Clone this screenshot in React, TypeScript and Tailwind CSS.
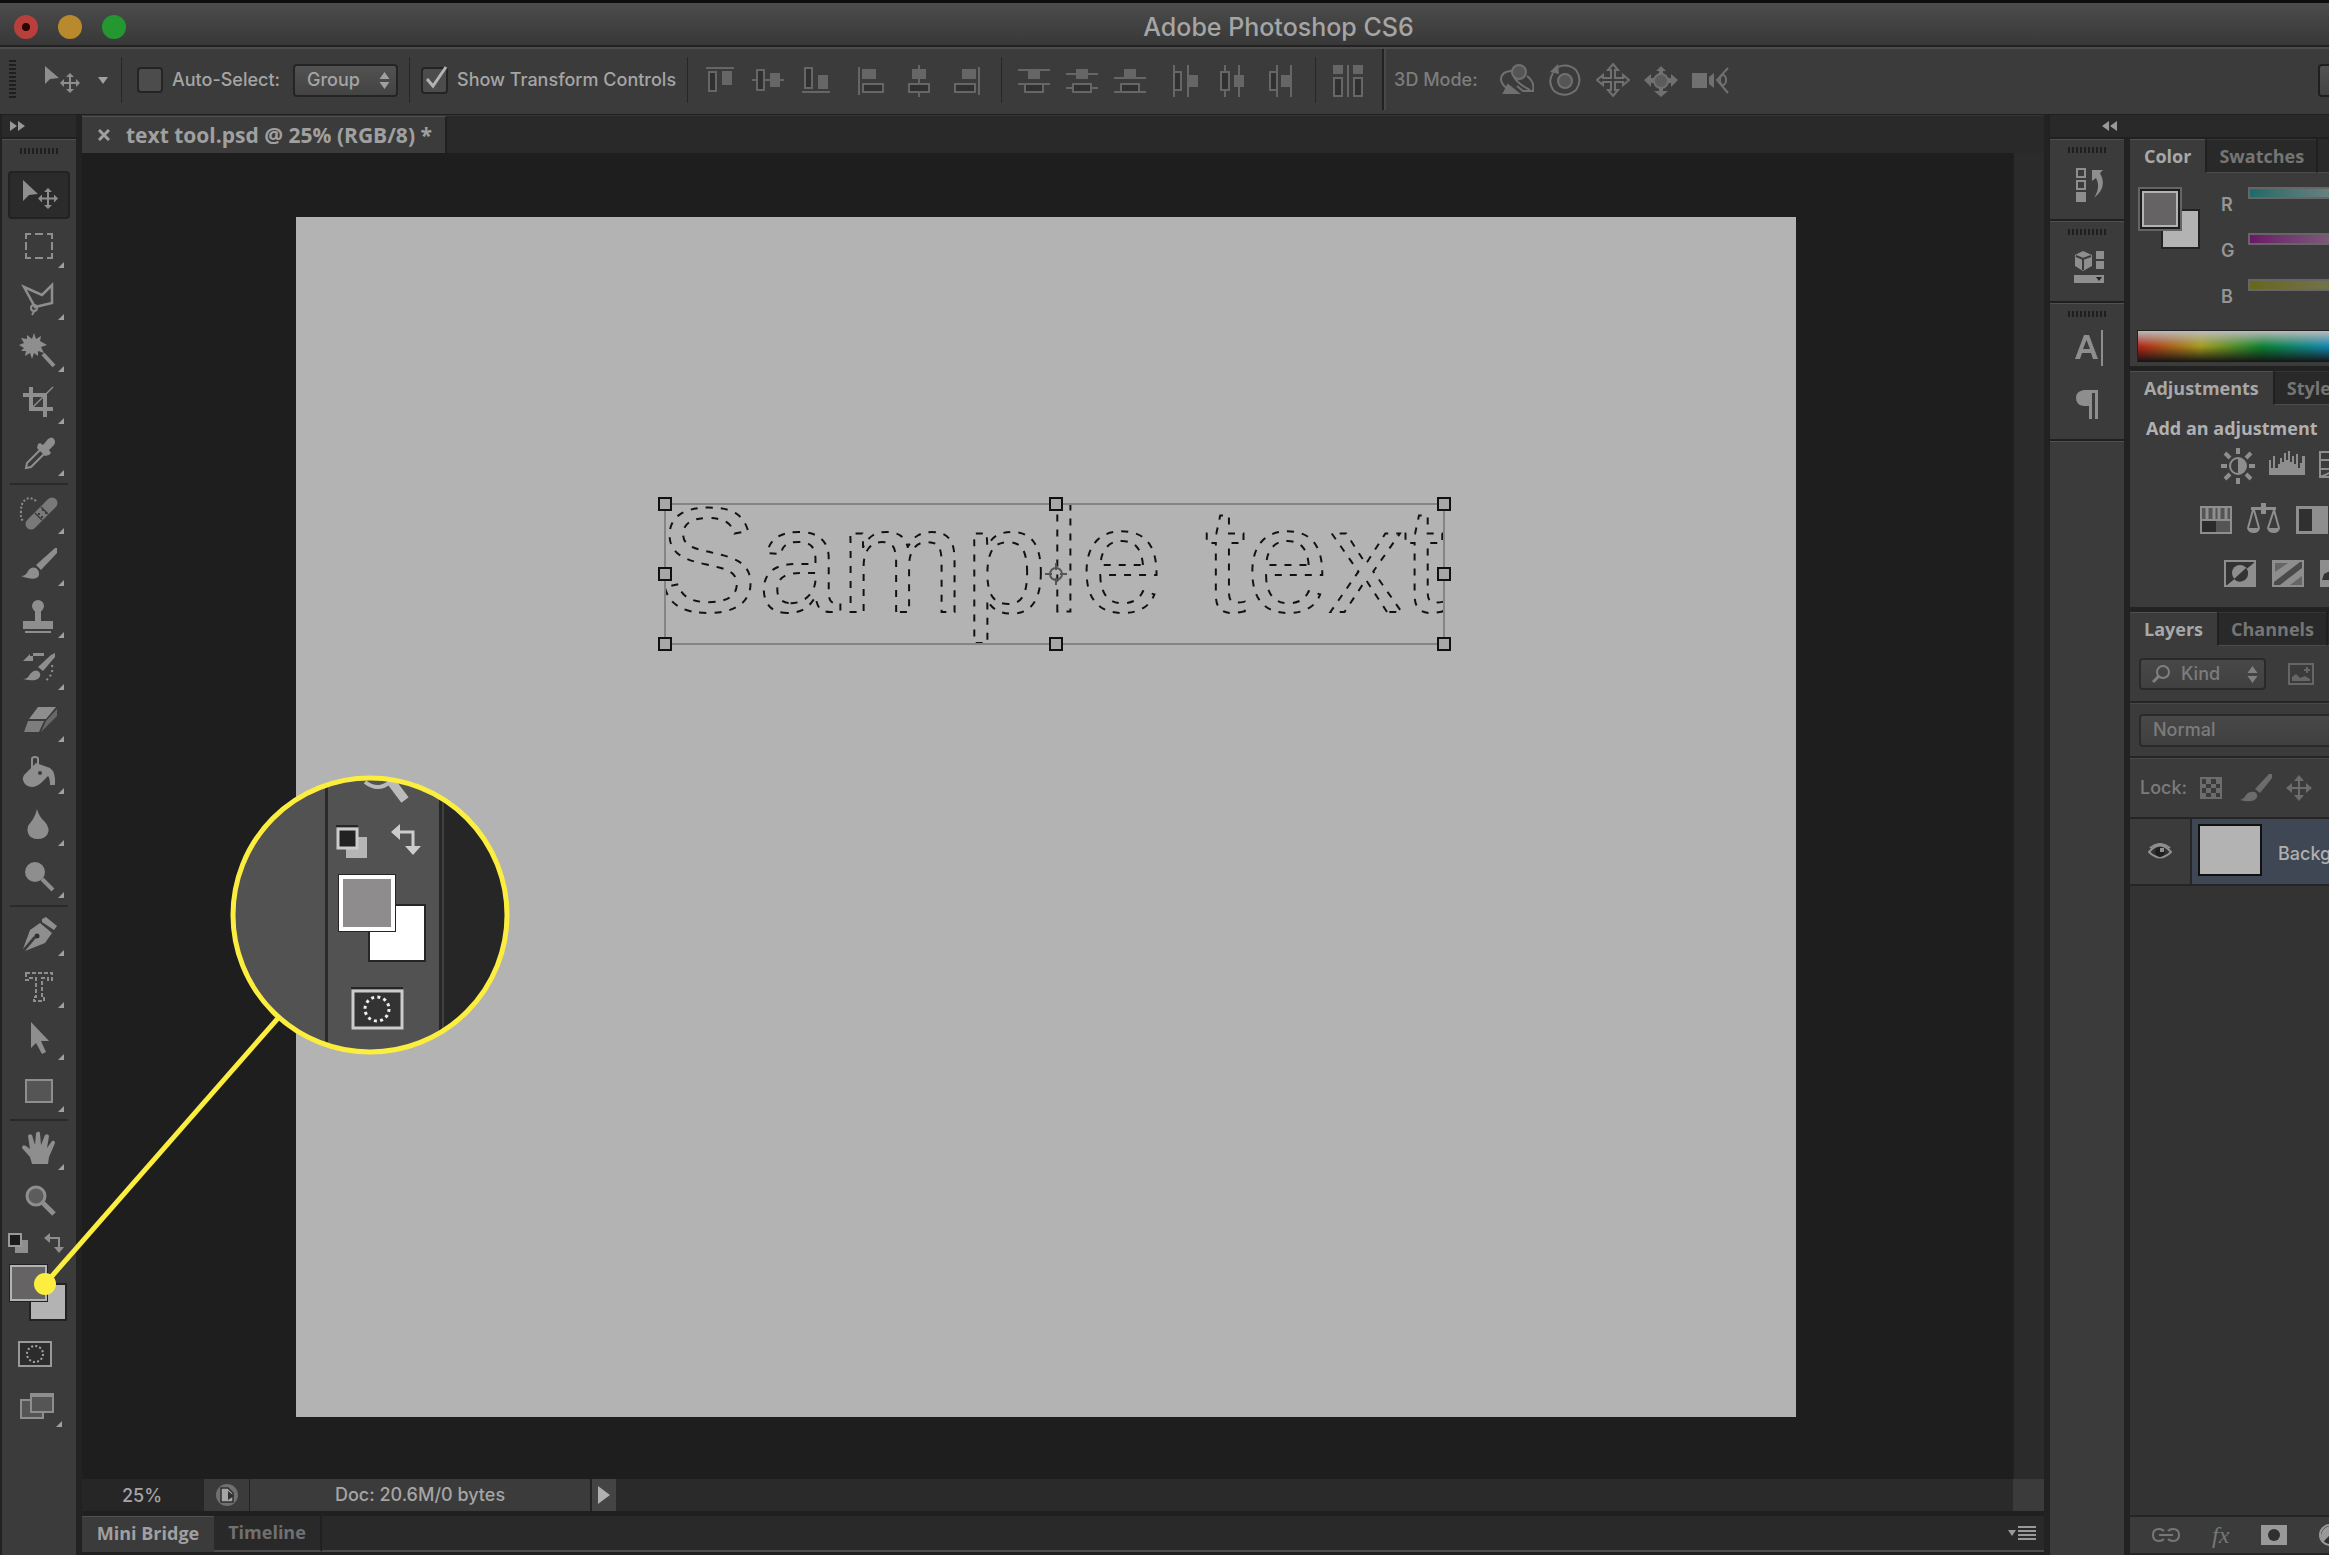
import type { ReactNode } from "react";

const TOOL_GROUPS: { name: string; art: ReactNode; corner?: boolean }[][] = [
  [
    {
      name: "Move tool",
      corner: false,
      art: (
        <>
          <path d="M2 3V24L8 18L17 17Z" fill="currentColor" />
          <path d="M27 14V29M19 21.5H35" stroke="currentColor" strokeWidth="2" />
          <path d="M27 11l-4 4h8zM27 32l-4-4h8zM17 21.5l4-4v8zM37 21.5l-4-4v8z" fill="currentColor" />
        </>
      ),
    },
    {
      name: "Rectangular marquee",
      art: (
        <path
          d="M5 10V5H10M14 5H22M26 5H31V10M31 13V21M31 24V29H26M22 29H14M10 29H5V24M5 21V13"
          fill="none"
          stroke="currentColor"
          strokeWidth="2"
        />
      ),
    },
    {
      name: "Polygonal lasso",
      art: (
        <>
          <path d="M3 6L21 14L31 4V22L14 26Z" fill="none" stroke="currentColor" strokeWidth="2.5" />
          <circle cx="13" cy="27" r="3" fill="none" stroke="currentColor" strokeWidth="2" />
          <path d="M14 29L11 34" stroke="currentColor" strokeWidth="2" />
        </>
      ),
    },
    {
      name: "Magic wand",
      art: (
        <>
          <path
            d="M13 0l2 6 5-3-1 5 7 4-6 2 3 6-6-2 0 5-4-3-2 6-2-6-5 3 1-5-5 0 3-3-5-3 5-2-3-5 6 1 0-4 5 4z"
            fill="currentColor"
          />
          <path d="M22 21L33 33" stroke="currentColor" strokeWidth="4" />
        </>
      ),
    },
    {
      name: "Crop tool",
      art: (
        <>
          <path d="M10 2V24H32M2 10H24V32" fill="none" stroke="currentColor" strokeWidth="4" />
          <path d="M32 2L12 22" stroke="currentColor" strokeWidth="1.5" />
        </>
      ),
    },
    {
      name: "Eyedropper",
      art: (
        <>
          <path d="M20 12L6 26L5 31L10 30L24 16" fill="none" stroke="currentColor" strokeWidth="2" />
          <path d="M17 7l2-1 3 2 5-6q4-3 6 0t0 6l-5 5 2 3-2 2-4 1-8-8z" fill="currentColor" />
        </>
      ),
    },
  ],
  [
    {
      name: "Healing brush",
      art: (
        <>
          <path d="M10 29L31 8" stroke="currentColor" strokeWidth="11" strokeLinecap="round" opacity=".75" />
          <path d="M14 18L21 25M20 12L27 19" stroke="#3b3b3b" strokeWidth="1.5" />
          <path d="M17 18h2v2h-2zM21 14h2v2h-2zM20 21h2v2h-2zM24 17h2v2h-2z" fill="#3b3b3b" />
          <path
            d="M15 6Q9 1 4 5Q0 8 0 16Q-1 24 3 27"
            fill="none"
            stroke="currentColor"
            strokeWidth="2"
            strokeDasharray="2 2"
          />
        </>
      ),
    },
    {
      name: "Brush tool",
      art: (
        <>
          <path d="M34 1L36 1V6L20 23L15 18Z" fill="currentColor" />
          <path d="M0 29Q5 29 7 24Q10 19 15 21Q20 25 17 30Q13 34 0 29Z" fill="currentColor" />
        </>
      ),
    },
    {
      name: "Clone stamp",
      art: (
        <>
          <circle cx="17" cy="7" r="6" fill="currentColor" />
          <path d="M14 12H20V22H32V30H2V22H14ZM4 32H30V34H4Z" fill="currentColor" />
        </>
      ),
    },
    {
      name: "History brush",
      art: (
        <>
          <path d="M34 2V6L22 20L17 16L30 4Z" fill="currentColor" />
          <path d="M2 28Q7 28 9 23Q13 18 17 20Q21 23 18 27Q14 31 2 28Z" fill="currentColor" />
          <path d="M2 10L9 3V5H23V2H12V10Z" fill="currentColor" />
          <path d="M31 14Q33 24 24 30" fill="none" stroke="currentColor" strokeWidth="2" strokeDasharray="2 3" />
        </>
      ),
    },
    {
      name: "Eraser",
      art: (
        <>
          <path d="M17 4H35L25 16H8Z" fill="currentColor" />
          <path d="M7 18H23L18 29H3Z" fill="currentColor" opacity=".8" />
          <path d="M25 18L36 6V13L20 29Z" fill="currentColor" opacity=".55" />
        </>
      ),
    },
    {
      name: "Paint bucket",
      art: (
        <>
          <path d="M11 13V4Q11 2 14 2Q17 2 17 4V14" fill="none" stroke="currentColor" strokeWidth="2" />
          <path d="M3 20L15 8L29 13Q35 17 34 30H29Q29 23 27 21L20 28Q12 35 5 30Q0 25 3 20Z" fill="currentColor" />
          <circle cx="19" cy="18" r="2" fill="#3b3b3b" />
        </>
      ),
    },
    {
      name: "Blur tool",
      art: <path d="M16 2Q18 10 24 15Q30 22 26 28Q23 32 17 32Q9 32 7 26Q5 20 10 15Q14 10 16 2Z" fill="currentColor" />,
    },
    {
      name: "Dodge tool",
      art: (
        <>
          <circle cx="14" cy="13" r="10" fill="currentColor" />
          <path d="M21 20L32 31" stroke="currentColor" strokeWidth="4" />
        </>
      ),
    },
  ],
  [
    {
      name: "Pen tool",
      art: (
        <>
          <path d="M21 2L25 0L36 9L33 13L21 5Z" fill="currentColor" />
          <path d="M19 6L31 16L24 26L4 34L15 21L13 19L2 32L9 13Z" fill="currentColor" />
          <circle cx="16" cy="19" r="2.5" fill="#303030" />
        </>
      ),
    },
    {
      name: "Type tool",
      art: (
        <path
          d="M5 4H31V11H27V9H21V28H23V32H13V28H15V9H9V11H5Z"
          fill="none"
          stroke="currentColor"
          strokeWidth="2"
          strokeDasharray="4 2"
        />
      ),
    },
    {
      name: "Path selection",
      art: <path d="M10 1V27L15 22L21 33L25 31L20 20H28Z" fill="currentColor" />,
    },
    {
      name: "Rectangle tool",
      art: <rect x="5" y="7" width="26" height="22" fill="#555555" stroke="currentColor" strokeWidth="2" />,
    },
  ],
  [
    {
      name: "Hand tool",
      art: (
        <path
          d="M11 33L9 26L1 17Q1 13 5 15L9 18L7 5Q8 2 11 4L14 14L15 2Q18 -1 19 2L20 14L24 4Q27 2 28 5L26 17L31 10Q34 9 34 12L28 26L27 33Z"
          fill="currentColor"
        />
      ),
    },
    {
      name: "Zoom tool",
      corner: false,
      art: (
        <>
          <circle cx="15" cy="13" r="9" fill="#5c5c5c" stroke="currentColor" strokeWidth="3" />
          <path d="M22 20L33 31" stroke="currentColor" strokeWidth="5" />
        </>
      ),
    },
  ],
];

const ALIGN_SETS: { name: string; line: string; box: string; fill: string }[][] = [
  [
    { name: "Align top edges", line: "M2 6H30", box: "M5 10H12V29H5Z", fill: "M18 9H28V23H18Z" },
    { name: "Align vertical centers", line: "M0 18H5M12 18H32", box: "M5 8H12V28H5Z", fill: "M18 11H28V25H18Z" },
    { name: "Align bottom edges", line: "M2 30H30", box: "M5 6H12V26H5Z", fill: "M18 13H28V27H18Z" },
  ],
  [
    { name: "Align left edges", line: "M4 5V33", box: "M8 22H28V30H8Z", fill: "M7 7H21V17H7Z" },
    { name: "Align horizontal centers", line: "M16 3V22M16 30V35", box: "M6 22H26V30H6Z", fill: "M9 7H23V17H9Z" },
    { name: "Align right edges", line: "M28 5V33", box: "M4 22H24V30H4Z", fill: "M11 7H25V17H11Z" },
  ],
  [
    { name: "Distribute top edges", line: "M0 8H32M0 22H32", box: "M7 22H25V30H7Z", fill: "M10 8H22V17H10Z" },
    { name: "Distribute vertical centers", line: "M0 12H32M0 26H7M25 26H32", box: "M7 22H25V30H7Z", fill: "M10 7H22V17H10Z" },
    { name: "Distribute bottom edges", line: "M0 16H32M0 30H32", box: "M7 22H25V30H7Z", fill: "M10 7H22V16H10Z" },
  ],
  [
    { name: "Distribute left edges", line: "M5 3V35M19 3V35", box: "M5 10H12V28H5Z", fill: "M19 13H29V25H19Z" },
    { name: "Distribute horizontal centers", line: "M8 3V10M8 28V35M22 3V35", box: "M4 10H12V28H4Z", fill: "M17 13H27V25H17Z" },
    { name: "Distribute right edges", line: "M12 3V35M26 3V35", box: "M5 10H12V28H5Z", fill: "M16 13H26V25H16Z" },
  ],
];

const stepArrows = "M5 0L10 7H0ZM0 10H10L5 17Z";

function AlignButton({ name, line, box, fill }: { name: string; line: string; box: string; fill: string }) {
  return (
    <button aria-label={name} className="h-9 w-8 text-[#666666]">
      <svg viewBox="0 0 32 36" className="size-full">
        <path d={line} stroke="currentColor" strokeWidth="2" />
        <path d={box} fill="#303030" stroke="currentColor" strokeWidth="2" />
        <path d={fill} fill="currentColor" />
      </svg>
    </button>
  );
}

function Divider() {
  return <span className="h-[46px] w-px bg-[#272727]" />;
}

function Grip() {
  return (
    <div className="flex h-2 w-[38px] justify-between" aria-hidden="true">
      {Array.from({ length: 10 }, (_, i) => (
        <span key={i} className="h-[6px] w-[2px] bg-[#1f1f1f]" />
      ))}
    </div>
  );
}

function ToolBox() {
  return (
    <aside className="flex w-[78px] shrink-0 flex-col border-x-2 border-[#222222] bg-[#3b3b3b]">
      <div className="flex h-[24px] items-center border-b-2 border-[#202020] bg-[#2a2a2a] pl-2">
        <button aria-label="Expand tools" className="text-[#999999]">
          <svg viewBox="0 0 16 10" className="h-[10px] w-4">
            <path d="M0 0L7 5L0 10ZM8 0L15 5L8 10Z" fill="currentColor" />
          </svg>
        </button>
      </div>
      <div className="flex h-[30px] justify-center border-t border-[#505050] pt-2">
        <Grip />
      </div>
      {TOOL_GROUPS.map((group, g) => (
        <div key={g}>
          {g > 0 && (
            <div className="flex h-[6px] items-center px-2">
              <span className="h-[2px] flex-1 bg-[#2a2a2a]" />
            </div>
          )}
          {group.map((tool) => (
            <button
              key={tool.name}
              aria-label={tool.name}
              className="relative flex h-[52px] w-full items-center justify-center text-[#8e8e8e]"
            >
              {tool.name === "Move tool" && (
                <span className="absolute inset-x-[6px] inset-y-[2px] rounded border-2 border-[#222222] bg-[#2b2b2b]" />
              )}
              <svg viewBox="0 0 36 36" className="relative size-9 overflow-visible">
                {tool.art}
              </svg>
              {tool.corner !== false && (
                <svg viewBox="0 0 6 6" className="absolute right-3 bottom-[5px] size-[6px]">
                  <path d="M6 0V6H0Z" fill="#a0a0a0" />
                </svg>
              )}
            </button>
          ))}
        </div>
      ))}
      <div className="flex justify-between px-[6px] pt-[6px] pr-3 text-[#8e8e8e]">
        <button aria-label="Default colors" className="size-5">
          <svg viewBox="0 0 20 20">
            <path d="M7 7H20V20H7Z" fill="currentColor" />
            <path d="M1 1H13V13H1Z" fill="#1c1c1c" stroke="#999999" strokeWidth="2" />
          </svg>
        </button>
        <button aria-label="Swap colors" className="size-5">
          <svg viewBox="0 0 20 20">
            <path d="M4 5H15V15" fill="none" stroke="currentColor" strokeWidth="2" />
            <path d="M0 5L6 0V10ZM10 14H20L15 20Z" fill="currentColor" />
          </svg>
        </button>
      </div>
      <div className="grid grid-cols-[19px_18px_20px] grid-rows-[18px_18px_20px] pt-3 pl-2">
        <button
          aria-label="Background color"
          className="col-span-2 col-start-2 row-span-2 row-start-2 border-2 border-[#222222] bg-[#b3b3b3]"
        />
        <button
          aria-label="Foreground color"
          className="col-span-2 col-start-1 row-span-2 row-start-1 border-2 border-[#b3b3b3] bg-[#656364] outline outline-[#222222]"
        />
      </div>
      <div className="flex flex-col items-center gap-[26px] pt-5 pr-2">
        <button aria-label="Quick mask mode" className="h-[26px] w-[34px]">
          <svg viewBox="0 0 34 26">
            <rect x="1" y="1" width="32" height="24" fill="#2c2c2c" stroke="#999999" strokeWidth="2" />
            <circle cx="17" cy="13" r="8" fill="none" stroke="#a5a5a5" strokeWidth="2" strokeDasharray="2 2.19" />
          </svg>
        </button>
        <button aria-label="Screen mode" className="ml-3 h-[34px] w-[42px]">
          <svg viewBox="0 0 42 34">
            <rect x="1" y="7" width="22" height="18" fill="#555555" stroke="#8e8e8e" strokeWidth="2" />
            <rect x="11" y="1" width="22" height="18" fill="#555555" stroke="#8e8e8e" strokeWidth="2" />
            <path d="M11 2H33" stroke="#8e8e8e" strokeWidth="4" />
            <path d="M42 28V34H36Z" fill="#a0a0a0" />
          </svg>
        </button>
      </div>
    </aside>
  );
}

function OptionsBar() {
  return (
    <div className="flex h-[67px] shrink-0 items-start overflow-hidden border-t-2 border-[#4c4c4c] bg-[#3b3b3b] text-lg font-medium whitespace-nowrap text-[#a5a5a5]">
      <div className="flex h-[62px] items-center pl-[9px]">
        <svg viewBox="0 0 7 40" className="h-10 w-[7px]">
          <path d="M3.5 0V40" stroke="#1f1f1f" strokeWidth="7" strokeDasharray="2 2" />
        </svg>
        <button aria-label="Move tool presets" className="ml-[29px] text-[#8e8e8e]">
          <svg viewBox="0 0 64 28" className="h-7 w-16">
            <path d="M0 0V18L5 13L14 12Z" fill="currentColor" />
            <path d="M25 11V23M19 17H31" stroke="currentColor" strokeWidth="2" />
            <path d="M25 7l-4 4h8zM25 27l-4-4h8zM15 17l4-4v8zM35 17l-4-4v8z" fill="currentColor" />
            <path d="M53 11H63L58 18Z" fill="#a0a0a0" />
          </svg>
        </button>
        <span className="ml-3" />
        <Divider />
        <label className="ml-[15px] flex items-center gap-[9px]">
          <input
            type="checkbox"
            className="size-[26px] appearance-none rounded border-2 border-[#242424] bg-[#4c4c4c]"
          />
          Auto-Select:
        </label>
        <div className="relative ml-[13px]">
          <select
            aria-label="Auto-select target"
            className="h-[33px] w-[105px] appearance-none rounded border-2 border-[#242424] bg-linear-to-b from-[#525252] to-[#434343] pl-3"
          >
            <option>Group</option>
          </select>
          <svg viewBox="0 0 10 17" className="pointer-events-none absolute top-2 right-2 h-[17px] w-[11px]">
            <path d={stepArrows} fill="#a0a0a0" />
          </svg>
        </div>
        <span className="ml-[11px]" />
        <Divider />
        <label className="ml-[11px] flex items-center gap-[9px]">
          <span className="relative">
            <input
              type="checkbox"
              defaultChecked
              className="peer block size-[27px] appearance-none rounded border-2 border-[#242424] bg-[#4c4c4c]"
            />
            <svg
              viewBox="0 0 30 30"
              className="pointer-events-none absolute -top-1 left-0 hidden size-[30px] peer-checked:block"
            >
              <path d="M6 16L12 23L25 4" fill="none" stroke="#b3b3b3" strokeWidth="3" />
            </svg>
          </span>
          Show Transform Controls
        </label>
        <span className="ml-[11px]" />
        <Divider />
        <div className="flex gap-[23px] pl-4">
          {ALIGN_SETS.slice(0, 2).map((set, i) => (
            <div key={i} className="flex gap-4">
              {set.map((a) => (
                <AlignButton key={a.name} {...a} />
              ))}
            </div>
          ))}
        </div>
        <span className="ml-[18px]" />
        <Divider />
        <div className="flex gap-[23px] pl-4">
          {ALIGN_SETS.slice(2).map((set, i) => (
            <div key={i} className="flex gap-4">
              {set.map((a) => (
                <AlignButton key={a.name} {...a} />
              ))}
            </div>
          ))}
        </div>
        <span className="ml-[18px]" />
        <Divider />
        <span className="ml-4" />
        <AlignButton
          name="Auto-align layers"
          line="M16 3V35"
          box="M2 16H10V34H2ZM22 16H30V34H22Z"
          fill="M1 3H11V12H1ZM21 3H31V12H21Z"
        />
      </div>
      <div className="ml-[18px] h-[61px] w-1 border-l-2 border-[#222222] bg-[#484848]" />
      <div className="flex h-[62px] items-center text-[#7d7d7d]">
        <span className="ml-2">3D Mode:</span>
        <div className="ml-[22px] flex gap-[14px] text-[#707070]">
          <button aria-label="Orbit 3D camera">
            <svg viewBox="0 0 34 34" className="size-[34px]" fill="none" stroke="currentColor" strokeWidth="2">
              <path d="M12 8Q1 8 1 17Q2 23 9 26M14 14Q18 21 30 27M27 13Q35 19 33 28H23L17 23" />
              <circle cx="19" cy="9" r="7" fill="#555555" />
              <path d="M4 30L8 22L18 30Z" fill="currentColor" />
            </svg>
          </button>
          <button aria-label="Roll 3D camera">
            <svg viewBox="0 0 34 34" className="size-[34px]" fill="none" stroke="currentColor" strokeWidth="2">
              <circle cx="17" cy="18" r="7" fill="#555555" />
              <path d="M10 4Q20 0 28 7Q35 17 28 27Q17 36 6 28Q-1 19 5 10" />
              <path d="M2 9L10 1L11 11Z" fill="currentColor" stroke="none" />
            </svg>
          </button>
          <button aria-label="Pan 3D camera">
            <svg viewBox="0 0 34 34" className="size-[34px]" fill="none" stroke="currentColor" strokeWidth="2">
              <path d="M17 1L22 7H19V15H27V12L33 17L27 22V19H19V27H22L17 33L12 27H15V19H7V22L1 17L7 12V15H15V7H12Z" />
            </svg>
          </button>
          <button aria-label="Slide 3D camera">
            <svg viewBox="0 0 34 34" className="size-[34px]" fill="currentColor">
              <circle cx="17" cy="18" r="7" fill="#5c5c5c" stroke="currentColor" strokeWidth="2" />
              <path d="M17 3L22 8H19V11H15V8H12ZM0 17L7 11V15H10V20H7V24ZM34 17L27 11V15H24V20H27V24ZM15 25H19V28H24L17 34L10 28H15Z" />
            </svg>
          </button>
          <button aria-label="Zoom 3D camera">
            <svg viewBox="0 0 38 34" className="h-[34px] w-[38px]" fill="currentColor">
              <path d="M0 10H15V25H0ZM17 14L22 10V25L17 21Z" />
              <path d="M36 5L25 17L36 30" fill="none" stroke="currentColor" strokeWidth="2" />
              <ellipse cx="31" cy="17" rx="3" ry="5" fill="none" stroke="currentColor" strokeWidth="2" />
            </svg>
          </button>
        </div>
      </div>
      <div className="ml-auto h-[60px] w-[11px] overflow-hidden pt-[15px]">
        <button
          aria-label="Workspace"
          className="h-[33px] w-40 rounded border-2 border-[#1f1f1f] bg-linear-to-b from-[#525252] to-[#434343]"
        />
      </div>
    </div>
  );
}

const HANDLES = [
  [9, 9],
  [400, 9],
  [788, 9],
  [9, 79],
  [788, 79],
  [9, 149],
  [400, 149],
  [788, 149],
];

function Artboard() {
  return (
    <div className="mt-16 ml-[214px] h-[1200px] w-[1500px] bg-[#b3b3b3] pt-[278px] pl-[360px]">
      <svg viewBox="0 0 800 160" className="h-40 w-[800px] overflow-visible">
        <text
          x="2"
          y="117"
          fontFamily="Liberation Sans, Arial, sans-serif"
          fontSize="149"
          fill="none"
          stroke="#111111"
          strokeWidth="2"
          strokeDasharray="7 8"
        >
          Sample text
        </text>
        <rect x="9" y="9" width="779" height="140" fill="none" stroke="#858585" strokeWidth="2" />
        <g fill="none" stroke="#555555" strokeWidth="2">
          <circle cx="400" cy="79" r="6" />
          <path d="M400 68V75M400 83V90M389 79H396M404 79H411" />
        </g>
        {HANDLES.map(([x, y]) => (
          <rect
            key={`${x}-${y}`}
            x={x - 6}
            y={y - 6}
            width="12"
            height="12"
            fill="#a8a8a8"
            stroke="#111111"
            strokeWidth="2"
          />
        ))}
      </svg>
    </div>
  );
}

function DocumentArea() {
  return (
    <main className="ml-[2px] flex min-w-0 flex-1 flex-col border-l-2 border-[#222222]">
      <div className="flex h-[38px] shrink-0 border-t border-[#353535] bg-[#292929]">
        <div className="flex w-[365px] items-center border-t border-r-2 border-t-[#505050] border-r-[#202020] bg-[#3b3b3b] pl-4 text-[21px] font-bold text-[#a0a0a0]">
          <button aria-label="Close document" className="mr-4 size-3">
            <svg viewBox="0 0 12 12">
              <path d="M1 1L11 11M11 1L1 11" stroke="#a0a0a0" strokeWidth="3" />
            </svg>
          </button>
          <span className="font-['Open_Sans',sans-serif] whitespace-nowrap">text tool.psd @ 25% (RGB/8) *</span>
        </div>
      </div>
      <div className="flex min-h-0 flex-1 bg-[#1e1e1e]">
        <div className="min-w-0 flex-1 overflow-hidden">
          <Artboard />
        </div>
        <div className="w-[31px] shrink-0 border-l border-[#222222] bg-[#2b2b2b]" />
      </div>
      <div className="flex h-8 shrink-0 bg-[#2a2a2a] text-lg font-medium text-[#a5a5a5]">
        <label className="w-[122px]">
          <input
            aria-label="Zoom level"
            defaultValue="25%"
            className="size-full bg-[#262626] pl-10 text-lg font-medium outline-none"
          />
        </label>
        <button
          aria-label="Share document"
          className="flex w-[46px] items-center justify-center border-r border-[#222222] bg-[#3b3b3b]"
        >
          <svg viewBox="0 0 22 22" className="size-[22px]">
            <circle cx="11" cy="11" r="11" fill="#707070" />
            <path d="M5 4H12L17 9V18H5Z" fill="#a5a5a5" stroke="#303030" strokeWidth="1.5" />
            <path d="M12 7L18 12L12 16Z" fill="#303030" />
          </svg>
        </button>
        <div className="flex w-[340px] items-center justify-center bg-[#3b3b3b]">Doc: 20.6M/0 bytes</div>
        <button
          aria-label="Status options"
          className="flex w-[26px] items-center justify-center border-l-2 border-[#222222] bg-[#444444]"
        >
          <svg viewBox="0 0 12 18" className="h-[18px] w-3">
            <path d="M0 0L12 9L0 18Z" fill="#b0b0b0" />
          </svg>
        </button>
        <div className="ml-auto w-[31px] bg-[#3b3b3b]" />
      </div>
      <div className="flex h-11 shrink-0 items-stretch border-t-[5px] border-b-[3px] border-[#202020] bg-[#292929] font-['Open_Sans',sans-serif] text-lg leading-6 font-bold">
        <button className="w-[132px] border-t border-[#505050] bg-[#3b3b3b] pb-1 text-[#a0a0a0]">Mini Bridge</button>
        <button className="w-[108px] border-r-2 border-b-2 border-r-[#202020] border-b-[#4c4c4c] pb-[2px] text-[#707070]">
          Timeline
        </button>
        <div className="flex flex-1 items-center justify-end border-b-2 border-[#4c4c4c] pr-2">
          <button aria-label="Panel menu">
            <svg viewBox="0 0 28 14" className="h-[14px] w-7">
              <path d="M0 4H8L4 10Z" fill="#999999" />
              <path d="M10 1H28M10 5H28M10 9H28M10 13H28" stroke="#999999" strokeWidth="2" />
            </svg>
          </button>
        </div>
      </div>
    </main>
  );
}

function IconDock() {
  return (
    <div className="flex w-[74px] shrink-0 flex-col bg-[#3b3b3b] text-[#8e8e8e]">
      <div className="flex h-[82px] flex-col items-center border-t border-b-2 border-t-[#505050] border-b-[#202020] pt-[7px]">
        <Grip />
        <button aria-label="History" className="mt-3 ml-[6px]">
          <svg viewBox="0 0 30 36" className="h-9 w-[30px]">
            <path d="M2 2H10V10H2ZM2 14H10V22H2Z" fill="none" stroke="currentColor" strokeWidth="2" />
            <path d="M1 25H11V35H1Z" fill="currentColor" />
            <path d="M17 14V3H28L25 6Q33 20 19 31Q26 20 21 11Z" fill="currentColor" />
          </svg>
        </button>
      </div>
      <div className="flex h-[82px] flex-col items-center border-t border-b-2 border-t-[#505050] border-b-[#202020] pt-[7px]">
        <Grip />
        <button aria-label="Properties" className="mt-3 ml-1">
          <svg viewBox="0 0 30 36" className="h-9 w-[30px]">
            <path d="M1 6L9 2L18 6V17L9 22L1 17Z" fill="currentColor" />
            <path d="M2 7L9 10L17 7M9 10V21" fill="none" stroke="#3b3b3b" strokeWidth="2" />
            <path d="M22 2H30V10H22ZM22 12H30V20H22ZM0 26H30V34H0Z" fill="currentColor" />
            <path d="M22 28H28L25 32Z" fill="#222222" />
          </svg>
        </button>
      </div>
      <div className="flex h-[138px] flex-col items-center border-t border-b-2 border-t-[#505050] border-b-[#202020] pt-[7px]">
        <Grip />
        <button aria-label="Character" className="mt-[10px] ml-1">
          <svg viewBox="0 0 30 38" className="h-[38px] w-[30px]">
            <path d="M1 30H6L8 24H17L19 30H24L15 6H10ZM9 20L12.5 11L16 20Z" fill="currentColor" fillRule="evenodd" />
            <path d="M28 1V37" stroke="currentColor" strokeWidth="2" />
          </svg>
        </button>
        <button aria-label="Paragraph" className="mt-[22px]">
          <svg viewBox="0 0 24 30" className="h-[30px] w-6">
            <path d="M23 1V30H20V4H17V30H14V17H9Q1 16 1 9Q1 2 9 1Z" fill="currentColor" />
          </svg>
        </button>
      </div>
      <div className="flex-1 border-t border-[#505050]" />
    </div>
  );
}

function PanelTabs({ active, rest }: { active: string; rest: string[] }) {
  return (
    <div className="flex h-[34px] shrink-0 overflow-hidden bg-[#292929] text-lg leading-6 font-bold whitespace-nowrap">
      <button className="border-t border-[#505050] bg-[#3b3b3b] px-[14px] pb-px text-[#a8a8a8]">{active}</button>
      {rest.map((name) => (
        <button
          key={name}
          className="border-y border-l-2 border-t-[#353535] border-b-[#4c4c4c] border-l-[#202020] px-3 text-[#757575]"
        >
          {name}
        </button>
      ))}
      <div className="w-20 border-b border-l-2 border-b-[#4c4c4c] border-l-[#202020]" />
    </div>
  );
}

const CHANNELS = [
  { name: "R", track: "bg-linear-to-r from-[#1d6b68] to-[#67807f]" },
  { name: "G", track: "bg-linear-to-r from-[#6a1668] to-[#7a5a78]" },
  { name: "B", track: "bg-linear-to-r from-[#66681a] to-[#72724a]" },
];

function ColorPanel() {
  return (
    <section className="h-[232px] shrink-0 border-b-[5px] border-[#222222]">
      <PanelTabs active="Color" rest={["Swatches"]} />
      <div className="flex pt-[14px] pl-2">
        <div className="grid h-[62px] w-[78px] grid-cols-[23px_21px_18px] grid-rows-[22px_22px_18px]">
          <button
            aria-label="Panel background color"
            className="col-span-2 col-start-2 row-span-2 row-start-2 border-2 border-[#222222] bg-[#b3b3b3]"
          />
          <button
            aria-label="Panel foreground color"
            className="col-span-2 col-start-1 row-span-2 row-start-1 border-2 border-[#656565] bg-[#1c1c1c] p-[2px]"
          >
            <span className="block size-full border-2 border-[#b3b3b3] bg-[#656364]" />
          </button>
        </div>
        <div className="flex min-w-0 flex-1 flex-col gap-4">
          {CHANNELS.map((c) => (
            <div key={c.name} className="flex h-[30px] items-start">
              <span className="w-[32px] shrink-0 pt-[6px] pl-[5px] font-['Inter',sans-serif] text-lg leading-6 font-semibold text-[#959595]">
                {c.name}
              </span>
              <div className={`h-3 flex-1 border-2 border-r-0 border-[#666666] ${c.track}`} />
            </div>
          ))}
        </div>
      </div>
      <div className="mt-[21px] ml-[7px] h-8 border-t border-l border-[#222222] bg-[linear-gradient(to_right,#b02318,#a39a1e_33%,#0c8030_65%,#1485b0)]">
        <div className="h-full bg-linear-to-b from-[#bbbbbb] via-transparent via-50% to-[#141414]" />
      </div>
    </section>
  );
}

const ADJUSTMENT_ROWS: { pad: string; items: { name: string; art: ReactNode }[] }[] = [
  {
    pad: "pl-[91px]",
    items: [
      {
        name: "Brightness",
        art: (
          <>
            <circle cx="17" cy="18" r="8" fill="none" stroke="currentColor" strokeWidth="2" />
            <path d="M17 10A8 8 0 0 1 17 26Z" fill="currentColor" />
            <path
              d="M17 0V6M17 30V36M0 18H6M28 18H34M4 5L9 10M25 26L30 31M30 5L25 10M9 26L4 31"
              stroke="currentColor"
              strokeWidth="4"
            />
          </>
        ),
      },
      {
        name: "Levels",
        art: (
          <path
            d="M0 27V12H2V20H4V8H6V20H9V16H11V10H13V14H15V5H17V12H19V3H21V14H23V8H25V16H27V6H29V20H31V15H33V8H36V27Z"
            fill="currentColor"
          />
        ),
      },
      {
        name: "Curves",
        art: (
          <path
            d="M3 4H34V29H3ZM3 12H34M3 21H34M13 4V29M23 4V29M3 29Q20 24 34 4"
            fill="none"
            stroke="currentColor"
            strokeWidth="2"
          />
        ),
      },
    ],
  },
  {
    pad: "pl-[69px]",
    items: [
      {
        name: "Hue/Saturation",
        art: (
          <>
            <rect x="2" y="5" width="30" height="26" fill="#555555" stroke="currentColor" strokeWidth="2" />
            <path d="M8 5V17M15 5V17M20 5V17M27 5V17" stroke="currentColor" strokeWidth="3" />
            <path d="M2 18H32" stroke="currentColor" strokeWidth="2" />
            <path d="M3 19H17V30H3Z" fill="#2c2c2c" />
          </>
        ),
      },
      {
        name: "Color balance",
        art: (
          <>
            <path
              d="M14 1H19V5H29V8H19V12H14V8H4V5H14ZM0 26H13Q12 31 7 31Q1 31 0 26ZM20 26H33Q32 31 27 31Q21 31 20 26Z"
              fill="currentColor"
            />
            <path d="M6 8L1 26M7 8L12 26M27 8L21 26M27 8L32 26" stroke="currentColor" strokeWidth="2" />
          </>
        ),
      },
      {
        name: "Black and white",
        art: (
          <>
            <rect x="2" y="5" width="30" height="26" fill="currentColor" stroke="currentColor" strokeWidth="2" />
            <path d="M4 7H17V29H4Z" fill="#303030" />
          </>
        ),
      },
    ],
  },
  {
    pad: "pl-[93px]",
    items: [
      {
        name: "Invert",
        art: (
          <>
            <rect x="2" y="5" width="30" height="25" fill="#333333" stroke="currentColor" strokeWidth="2" />
            <path d="M32 6V30H3Z" fill="currentColor" />
            <circle cx="17" cy="17" r="8" fill="currentColor" />
            <path d="M23 12A8 8 0 0 1 11 23Z" fill="#333333" />
          </>
        ),
      },
      {
        name: "Gradient map",
        art: (
          <>
            <rect x="2" y="5" width="30" height="25" fill="currentColor" stroke="currentColor" strokeWidth="2" />
            <path d="M3 26L29 6H31V12L9 29H3Z" fill="#4a4a4a" />
            <path d="M4 7H17L4 16ZM19 29H31V20Z" fill="#666666" />
          </>
        ),
      },
      {
        name: "Threshold",
        art: (
          <>
            <rect x="2" y="5" width="30" height="25" fill="currentColor" stroke="currentColor" strokeWidth="2" />
            <path d="M3 24L5 18L11 15V24Z" fill="#333333" />
          </>
        ),
      },
    ],
  },
];

function AdjustmentsPanel() {
  return (
    <section className="h-[241px] shrink-0 border-b-[5px] border-[#222222]">
      <PanelTabs active="Adjustments" rest={["Styles"]} />
      <h2 className="pt-[11px] pl-4 text-lg leading-6 font-bold whitespace-nowrap text-[#b0b0b0]">Add an adjustment</h2>
      <div className="flex flex-col gap-[18px] pt-2 text-[#8e8e8e]">
        {ADJUSTMENT_ROWS.map((row) => (
          <div key={row.pad} className={`flex gap-3 overflow-hidden ${row.pad}`}>
            {row.items.map((item) => (
              <button key={item.name} aria-label={item.name} className="size-9 shrink-0">
                <svg viewBox="0 0 36 36">{item.art}</svg>
              </button>
            ))}
          </div>
        ))}
      </div>
    </section>
  );
}

function LayersPanel() {
  return (
    <section className="flex min-h-0 flex-1 flex-col font-['Inter',sans-serif] text-lg leading-6 font-medium text-[#7c7c7c]">
      <div className="font-['Open_Sans',sans-serif]">
        <PanelTabs active="Layers" rest={["Channels"]} />
      </div>
      <div className="flex h-[57px] items-center gap-[22px] border-b-2 border-[#252525] pt-px pl-[9px]">
        <div className="relative">
          <select
            aria-label="Layer filter"
            className="h-8 w-[127px] appearance-none rounded border-2 border-[#2a2a2a] bg-linear-to-b from-[#484848] to-[#404040] pl-10"
          >
            <option>Kind</option>
          </select>
          <svg viewBox="0 0 18 18" className="pointer-events-none absolute top-[7px] left-[13px] size-[18px]">
            <circle cx="11" cy="7" r="6" fill="none" stroke="#808080" strokeWidth="2" />
            <path d="M7 11L1 17" stroke="#808080" strokeWidth="3" />
          </svg>
          <svg viewBox="0 0 10 17" className="pointer-events-none absolute top-2 right-2 h-[17px] w-[11px]">
            <path d={stepArrows} fill="#808080" />
          </svg>
        </div>
        <button aria-label="Filter pixel layers">
          <svg viewBox="0 0 26 22" className="h-[22px] w-[26px]">
            <rect x="1" y="1" width="24" height="20" fill="none" stroke="#666666" strokeWidth="2" />
            <path d="M4 18V14L8 11L12 15L17 13L22 16V18ZM18 4H20V6H22V8H20V10H18V8H16V6H18Z" fill="#666666" />
          </svg>
        </button>
      </div>
      <div className="flex h-[55px] items-center border-t border-b-2 border-t-[#484848] border-b-[#252525] pl-[9px]">
        <select
          aria-label="Blend mode"
          className="h-[33px] w-[220px] shrink-0 appearance-none rounded border-2 border-[#2a2a2a] bg-linear-to-b from-[#484848] to-[#404040] pl-3"
        >
          <option>Normal</option>
        </select>
      </div>
      <div className="flex h-[61px] items-center border-t border-b-2 border-t-[#484848] border-b-[#252525] pl-[10px]">
        <span className="w-[60px]">Lock:</span>
        <button aria-label="Lock transparent pixels" className="mr-[18px]">
          <svg viewBox="0 0 22 22" className="size-[22px]">
            <rect width="22" height="22" fill="#6c6c6c" />
            <path d="M2 2h4v5h-4zM11 2h5v5h-5zM6 7h5v4h-5zM16 7h4v4h-4zM2 11h4v5h-4zM11 11h5v5h-5zM6 16h5v4h-5zM16 16h4v4h-4z" fill="#3b3b3b" />
          </svg>
        </button>
        <button aria-label="Lock image pixels" className="mr-[14px]">
          <svg viewBox="0 0 32 28" className="h-7 w-8">
            <path d="M29 0H32V4L20 19L15 15ZM0 26Q4 25 6 21Q9 17 15 18Q19 21 16 25Q11 29 0 26Z" fill="#6c6c6c" />
          </svg>
        </button>
        <button aria-label="Lock position">
          <svg viewBox="0 0 26 26" className="size-[26px]">
            <path d="M13 3V23M3 13H23" stroke="#6c6c6c" strokeWidth="2" />
            <path d="M13 0L18 6H8ZM13 26L18 20H8ZM0 13L6 8V18ZM26 13L20 8V18Z" fill="#6c6c6c" />
          </svg>
        </button>
      </div>
      <div className="flex h-[67px] overflow-hidden border-b-2 border-[#252525]">
        <button
          aria-label="Toggle layer visibility"
          className="flex w-[62px] shrink-0 items-center justify-center border-r-2 border-[#252525]"
        >
          <svg viewBox="0 0 24 18" className="h-[18px] w-6">
            <path d="M1 9Q12 -4 23 9Q12 20 1 9Z" fill="#333333" stroke="#909090" strokeWidth="2" />
            <circle cx="12" cy="9" r="5" fill="#1f1f1f" />
            <path d="M12 5h4v4h-4z" fill="#909090" />
            <path d="M2 5Q12 -3 22 5" fill="none" stroke="#909090" strokeWidth="2" />
          </svg>
        </button>
        <div className="flex flex-1 items-start bg-[#3f4755] pt-[5px] pl-[6px]">
          <span className="h-[52px] w-16 shrink-0 border-2 border-[#111111] bg-[#b3b3b3]" />
          <span className="pt-[18px] pl-4 text-[#b0b0b0]">Background</span>
        </div>
      </div>
      <div className="flex-1 bg-[#333333]" />
      <div className="flex h-[40px] shrink-0 items-center overflow-hidden border-t-2 border-b-2 border-[#252525] pl-[22px] text-[#777777]">
        <button aria-label="Link layers">
          <svg viewBox="0 0 28 14" className="h-[14px] w-7">
            <path
              d="M12 3Q10 1 7 1Q1 1 1 7Q1 13 7 13Q10 13 12 11M16 3Q18 1 21 1Q27 1 27 7Q27 13 21 13Q18 13 16 11M7 7H21"
              fill="none"
              stroke="currentColor"
              strokeWidth="2"
            />
          </svg>
        </button>
        <button className="ml-8 w-6 font-['Liberation_Serif',serif] text-2xl italic">fx</button>
        <button aria-label="Add mask" className="ml-8">
          <svg viewBox="0 0 26 20" className="h-5 w-[26px]">
            <rect width="26" height="20" fill="#999999" />
            <circle cx="13" cy="10" r="6" fill="#303030" />
          </svg>
        </button>
        <button aria-label="New adjustment layer" className="ml-8">
          <svg viewBox="0 0 22 22" className="size-[22px]">
            <circle cx="11" cy="11" r="10" fill="#303030" stroke="#999999" strokeWidth="2" />
            <path d="M18 4L4 18A10 10 0 0 1 18 4Z" fill="#999999" />
          </svg>
        </button>
      </div>
    </section>
  );
}

function Callout() {
  return (
    <svg
      viewBox="0 0 520 1310"
      className="pointer-events-none absolute top-0 left-0 h-[1310px] w-[520px]"
      aria-hidden="true"
    >
      <defs>
        <clipPath id="lens">
          <circle cx="370" cy="915" r="137" />
        </clipPath>
      </defs>
      <g clipPath="url(#lens)">
        <rect x="230" y="775" width="280" height="280" fill="#525252" />
        <path d="M326.5 775V1055" stroke="#2a2a2a" strokeWidth="3" />
        <rect x="439" y="775" width="80" height="280" fill="#262626" />
        <path d="M443 775V1055" stroke="#404040" strokeWidth="2" />
        <path d="M365 782Q378 792 390 782" fill="none" stroke="#bababa" strokeWidth="4" />
        <path d="M390 780L405 800" stroke="#bababa" strokeWidth="9" />
        <path d="M346 837H367V858H346Z" fill="#b5b5b5" />
        <path d="M338 829H357V848H338Z" fill="#222222" stroke="#cccccc" strokeWidth="3" />
        <path d="M336 826H358" stroke="#262626" strokeWidth="2" />
        <path d="M397 832H413V848" fill="none" stroke="#cccccc" strokeWidth="3" />
        <path d="M391 832L400 824V840ZM405 846H421L413 855Z" fill="#cccccc" />
        <rect x="369" y="905" width="56" height="56" fill="#ffffff" stroke="#262626" strokeWidth="2" />
        <rect x="338" y="874" width="58" height="58" fill="#262626" />
        <rect x="341" y="877" width="52" height="52" fill="#8f8c8d" stroke="#ffffff" strokeWidth="4" />
        <path d="M351 988H403" stroke="#262626" strokeWidth="2" />
        <rect x="353" y="991" width="49" height="37" fill="#333333" stroke="#cccccc" strokeWidth="3" />
        <circle cx="377" cy="1009" r="12" fill="none" stroke="#eeeeee" strokeWidth="3" strokeDasharray="3 3.283" />
      </g>
      <circle cx="370" cy="915" r="137" fill="none" stroke="#fcee3f" strokeWidth="5" />
      <path d="M279 1017L45 1284" stroke="#fcee3f" strokeWidth="5" />
      <circle cx="45" cy="1284" r="11" fill="#fcee3f" />
    </svg>
  );
}

export default function App() {
  return (
    <div className="relative flex h-screen flex-col overflow-hidden bg-[#222222] font-['Inter',sans-serif] leading-6">
      <header className="relative flex h-[47px] shrink-0 items-center justify-center border-t-[3px] border-b-2 border-t-[#0d0d0d] border-b-[#222222] bg-linear-to-b from-[#4c4c4c] to-[#383838] pt-[6px] pl-[228px]">
        <div className="absolute top-3 left-[14px] flex gap-5">
          <button aria-label="Close" className="flex size-6 items-center justify-center rounded-full bg-[#b83f3b]">
            <span className="size-2 rounded-full bg-[#2c0503]" />
          </button>
          <button aria-label="Minimize" className="size-6 rounded-full bg-[#b98a2d]" />
          <button aria-label="Zoom window" className="size-6 rounded-full bg-[#249731]" />
        </div>
        <h1 className="text-[25px] font-medium text-[#a5a5a5]">Adobe Photoshop CS6</h1>
      </header>
      <OptionsBar />
      <div className="flex min-h-0 flex-1 border-t border-[#202020]">
        <ToolBox />
        <DocumentArea />
        <aside className="ml-[5px] flex w-[280px] shrink-0 flex-col border-l border-[#202020]">
          <div className="flex h-[24px] shrink-0 items-center border-b-2 border-[#202020] bg-[#292929] pl-[52px]">
            <button aria-label="Collapse panels">
              <svg viewBox="0 0 16 10" className="h-[10px] w-4">
                <path d="M7 0L0 5L7 10ZM15 0L8 5L15 10Z" fill="#999999" />
              </svg>
            </button>
          </div>
          <div className="flex min-h-0 flex-1">
            <IconDock />
            <div className="ml-[6px] flex min-w-0 flex-1 flex-col bg-[#3b3b3b] font-['Open_Sans',sans-serif]">
              <ColorPanel />
              <AdjustmentsPanel />
              <LayersPanel />
            </div>
          </div>
        </aside>
      </div>
      <Callout />
    </div>
  );
}
